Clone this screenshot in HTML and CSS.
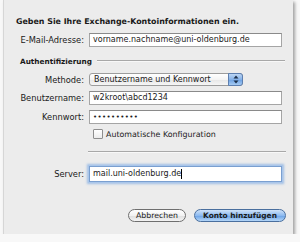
FILE: index.html
```html
<!DOCTYPE html>
<html lang="de">
<head>
    <meta charset="UTF-8">
    <title>Exchange-Konto</title>
    <link rel="stylesheet" href="styles.css">
</head>
<body>
    <div class="sheet">
        <div class="title">Geben Sie Ihre Exchange-Kontoinformationen ein.</div>

        <div class="row row-email">
            <label class="label">E-Mail-Adresse:</label>
            <div class="field">vorname.nachname@uni-oldenburg.de</div>
        </div>

        <!-- Authentifizierung -->
        <div class="group">
            <span class="group-title">Authentifizierung</span>
            <span class="group-line"></span>
        </div>

        <div class="row row-method">
            <label class="label">Methode:</label>
            <div class="popup">
                <span class="popup-text">Benutzername und Kennwort</span>
                <span class="popup-arrows">
                    <svg width="6" height="9" viewBox="0 0 6 9">
                        <path d="M3 0.5 L5.5 3.5 L0.5 3.5 Z" fill="#1b2f4a"/>
                        <path d="M3 8.5 L5.5 5.5 L0.5 5.5 Z" fill="#1b2f4a"/>
                    </svg>
                </span>
            </div>
        </div>

        <div class="row row-user">
            <label class="label">Benutzername:</label>
            <div class="field">w2kroot\abcd1234</div>
        </div>

        <div class="row row-pass">
            <label class="label">Kennwort:</label>
            <div class="field dots">&bull;&bull;&bull;&bull;&bull;&bull;&bull;&bull;&bull;&bull;</div>
        </div>

        <div class="row row-check">
            <span class="label"></span>
            <span class="checkbox"></span>
            <span class="check-text">Automatische Konfiguration</span>
        </div>

        <div class="divider"></div>

        <div class="row row-server">
            <label class="label">Server:</label>
            <div class="field focus">mail.uni-oldenburg.de<span class="caret"></span></div>
        </div>

        <div class="buttons">
            <button class="btn btn-cancel">Abbrechen</button>
            <button class="btn btn-default">Konto hinzufügen</button>
        </div>
    </div>
</body>
</html>
```

FILE: styles.css
```css
body {
    margin: 0;
    background-color: #f8f8f8;
    font-family: "DejaVu Sans", sans-serif;
    font-size: 8.3px;
    color: #1a1a1a;
}

.sheet {
    margin-left: 3px;
    width: 290px;
    height: 234px;
    padding-top: 16px;
    box-sizing: border-box;
    background-color: #ececec;
    border-left: 1px solid #d6d6d6;
    box-shadow: 2px 2px 3px rgba(0, 0, 0, 0.35);
}

.title {
    height: 12px;
    line-height: 12px;
    padding-left: 12px;
    font-size: 7.9px;
    font-weight: bold;
    white-space: nowrap;
}

.row {
    display: flex;
    align-items: center;
}

.label {
    width: 85px;
    padding-right: 5px;
    box-sizing: border-box;
    text-align: right;
    flex-shrink: 0;
    white-space: nowrap;
}

.field {
    width: 193px;
    height: 14px;
    box-sizing: border-box;
    padding-left: 3px;
    line-height: 12px;
    background-color: #fff;
    border: 1px solid #a5a5a5;
    border-top-color: #8a8a8a;
    font-size: 8px;
    white-space: nowrap;
}

.dots {
    font-size: 7px;
    letter-spacing: 0.4px;
}

.focus {
    height: 16px;
    line-height: 14px;
    border-color: #7a9fd0;
    box-shadow: 0 0 0 1px #a9c6ea, 0 0 2px 2px rgba(110, 160, 225, 0.6);
}

.caret {
    display: inline-block;
    width: 1px;
    height: 10px;
    background-color: #000;
    vertical-align: middle;
}

.row-email { margin-top: 5px; height: 14px; }
.row-method { margin-top: 6px; height: 13px; }
.row-user { margin-top: 5px; height: 14px; }
.row-pass { margin-top: 5px; height: 14px; }
.row-check { margin-top: 4px; height: 12px; }
.row-server { margin-top: 13px; height: 16px; }

/* group header */
.group {
    display: flex;
    align-items: center;
    margin-top: 8px;
    height: 12px;
    padding-left: 16px;
    padding-right: 8px;
}

.group-title {
    font-size: 7.3px;
    font-weight: bold;
    white-space: nowrap;
    margin-right: 5px;
}

.group-line {
    flex: 1;
    height: 1px;
    background-color: #a8a8a8;
    border-bottom: 1px solid #f8f8f8;
}

.popup {
    position: relative;
    width: 154px;
    height: 13px;
    box-sizing: border-box;
    border: 1px solid #9c9c9c;
    border-radius: 3px;
    background: linear-gradient(#ffffff, #f4f4f4 50%, #e6e6e6 51%, #f6f6f6);
    line-height: 11px;
    padding-left: 4px;
    font-size: 8px;
    white-space: nowrap;
}

.popup-arrows {
    position: absolute;
    right: -1px;
    top: -1px;
    width: 15px;
    height: 13px;
    box-sizing: border-box;
    border: 1px solid #5d7fb0;
    border-radius: 0 3px 3px 0;
    background: linear-gradient(#bcd6f4, #84b1e8 50%, #6a9fe2 51%, #a6cbf3);
    display: flex;
    align-items: center;
    justify-content: center;
}

.checkbox {
    width: 10px;
    height: 10px;
    box-sizing: border-box;
    border: 1px solid #8e8e8e;
    border-radius: 1px;
    background: linear-gradient(#ffffff, #ececec);
    margin-left: 4px;
    margin-right: 3px;
}

.check-text {
    font-size: 7.9px;
    white-space: nowrap;
}

.divider {
    margin-top: 11px;
    margin-left: 84px;
    width: 198px;
    height: 1px;
    background-color: #a8a8a8;
    border-bottom: 1px solid #f8f8f8;
}

.buttons {
    display: flex;
    justify-content: flex-end;
    gap: 8px;
    margin-top: 27px;
    padding-right: 7px;
}

.btn {
    height: 13px;
    padding: 0;
    border: 1px solid #6f6f6f;
    border-radius: 7px;
    background: linear-gradient(#ffffff, #f2f2f2 50%, #dedede 51%, #f4f4f4);
    font-family: "DejaVu Sans", sans-serif;
    font-size: 7.8px;
    line-height: 11px;
    color: #1a1a1a;
    white-space: nowrap;
}

.btn-cancel {
    width: 58px;
}

.btn-default {
    width: 92px;
    border-color: #4a6f9e;
    background: linear-gradient(#cfe2f8, #8dbaf0 50%, #69a1e6 51%, #b4d6f8);
    font-weight: bold;
    font-size: 7.4px;
}
```
